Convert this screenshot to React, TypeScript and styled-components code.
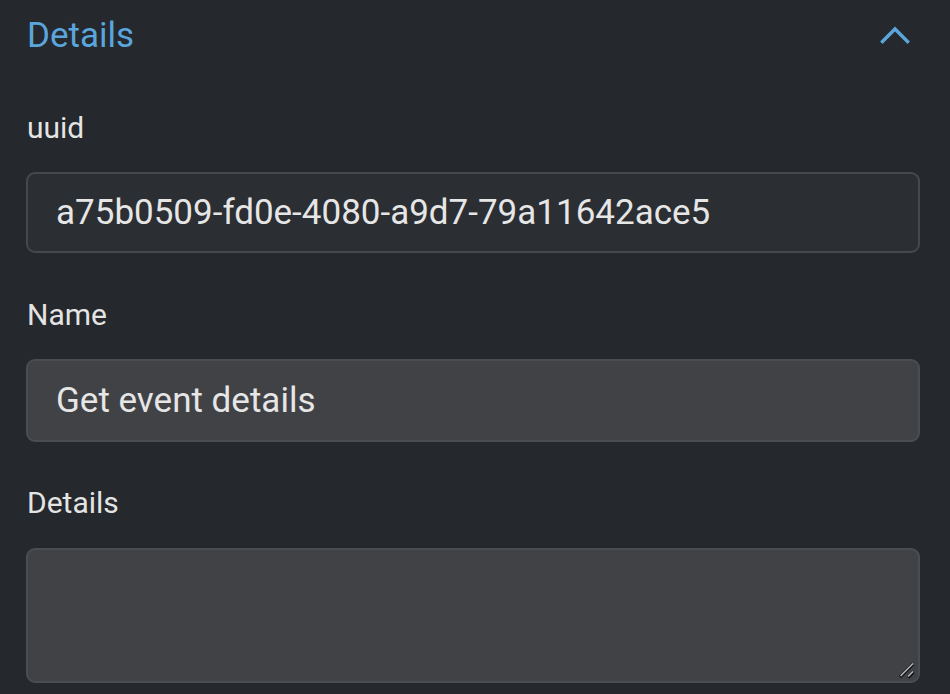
import React from "react";
import styled, { createGlobalStyle } from "styled-components";

const GlobalStyle = createGlobalStyle`
  html, body {
    margin: 0;
    padding: 0;
    background: #25282c;
    color-scheme: dark;
  }
  * { box-sizing: border-box; }
`;

const Panel = styled.div`
  width: 950px;
  height: 694px;
  overflow: hidden;
  background: #25282c;
  padding: 15px 30px 0 26px;
  font-family: Roboto, "Liberation Sans", sans-serif;
`;

const Header = styled.div`
  display: flex;
  align-items: center;
  justify-content: space-between;
  height: 42px;
  margin-bottom: 53px;
`;

const Title = styled.h2`
  margin: 0;
  font-size: 35px;
  font-weight: 400;
  line-height: 42px;
  color: #5aa6dc;
  padding-left: 1px;
`;

const ToggleButton = styled.button`
  display: flex;
  align-items: center;
  justify-content: center;
  width: 40px;
  height: 40px;
  margin-right: 5px;
  margin-top: -2px;
  padding: 0;
  border: none;
  background: transparent;
  color: #5aa6dc;
  cursor: pointer;
`;

const Field = styled.div<{ $gap?: number }>`
  display: flex;
  flex-direction: column;
  margin-bottom: ${(p) => p.$gap ?? 44}px;
`;

const Label = styled.label`
  font-size: 30px;
  line-height: 36px;
  color: #e4e4e4;
  margin-bottom: 26px;
  padding-left: 1px;
`;

const TextInput = styled.input<{ $readOnlyLook?: boolean }>`
  width: 100%;
  height: ${(p) => (p.$readOnlyLook ? 81 : 83)}px;
  padding: 0 28px;
  border: 2px solid ${(p) => (p.$readOnlyLook ? "#45484d" : "#4c4d52")};
  border-radius: 9px;
  background: ${(p) => (p.$readOnlyLook ? "#2b2e33" : "#414246")};
  color: #e6e6e6;
  font-family: Roboto, "Liberation Sans", sans-serif;
  font-size: 35px;
  outline: none;
`;

const AreaWrap = styled.div`
  position: relative;
  margin-top: 1px;
`;

const TextArea = styled.textarea`
  width: 100%;
  height: 135px;
  padding: 20px 28px;
  border: 2px solid #4c4d52;
  border-radius: 9px;
  background: #414246;
  color: #e6e6e6;
  font-family: Roboto, "Liberation Sans", sans-serif;
  font-size: 35px;
  resize: vertical;
  outline: none;
  display: block;

  &::-webkit-resizer {
    background: transparent;
  }
`;

const Grip = styled.svg`
  position: absolute;
  right: 4px;
  bottom: 4px;
  pointer-events: none;
`;

const ChevronUp = () => (
  <svg width="30" height="20" viewBox="0 0 30 20" fill="none">
    <path
      d="M2.5 16.5 L15 4 L27.5 16.5"
      stroke="currentColor"
      strokeWidth="3.4"
      strokeLinecap="square"
    />
  </svg>
);

export default function App() {
  return (
    <>
      <GlobalStyle />
      <Panel>
        <Header>
          <Title>Details</Title>
          <ToggleButton aria-label="Collapse">
            <ChevronUp />
          </ToggleButton>
        </Header>
        <Field>
          <Label>uuid</Label>
          <TextInput
            $readOnlyLook
            readOnly
            defaultValue="a75b0509-fd0e-4080-a9d7-79a11642ace5"
          />
        </Field>
        <Field $gap={43}>
          <Label>Name</Label>
          <TextInput defaultValue="Get event details" />
        </Field>
        <Field $gap={0}>
          <Label>Details</Label>
          <AreaWrap>
            <TextArea />
            <Grip width="18" height="18" viewBox="0 0 18 18" fill="none">
              <path d="M2 16 L15 3" stroke="#111214" strokeWidth="3.2" />
              <path d="M10 16.5 L15.5 11" stroke="#111214" strokeWidth="3.2" />
              <path d="M2.5 15 L15 2.5" stroke="#b5b6b8" strokeWidth="1.6" />
              <path d="M10 15.5 L15 10.5" stroke="#b5b6b8" strokeWidth="1.6" />
            </Grip>
          </AreaWrap>
        </Field>
      </Panel>
    </>
  );
}
